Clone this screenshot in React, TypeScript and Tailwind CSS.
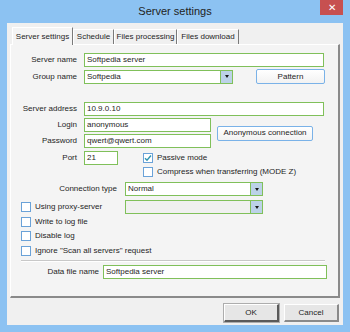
import React from 'react';

function TextBox({ value, className }: { value: string; className: string }) {
  return (
    <div className={`flex h-[14px] items-center border border-[#80c05a] bg-white px-[2px] leading-none ${className}`}>
      {value}
    </div>
  );
}

function Combo({ value, className, disabled }: { value: string; className: string; disabled?: boolean }) {
  return (
    <div className={`flex h-[14px] border border-[#80c05a] ${disabled ? 'bg-[#f0f0f0]' : 'bg-white'} ${className}`}>
      <div className="flex flex-1 items-center px-[2px] leading-none">{value}</div>
      <div className="flex w-[12px] items-center justify-center border-l border-[#80c05a] bg-[#bcd2e8]">
        <div className="h-0 w-0 border-x-[2.5px] border-t-[3px] border-x-transparent border-t-[#1a1a1a]" />
      </div>
    </div>
  );
}

function Check({ label, checked }: { label: string; checked?: boolean }) {
  return (
    <div className="flex items-center gap-[4px]">
      <div className="flex h-[10px] w-[10px] items-center justify-center border border-[#6aa2d8] bg-white">
        {checked && (
          <svg width="8" height="8" viewBox="0 0 8 8">
            <path d="M1 4.2 L3 6.2 L7 1.5" fill="none" stroke="#2f94b0" strokeWidth="1.4" />
          </svg>
        )}
      </div>
      <span className="leading-none">{label}</span>
    </div>
  );
}

function Label({ text, className }: { text: string; className: string }) {
  return <div className={`text-right leading-none ${className}`}>{text}</div>;
}

export default function App() {
  return (
    <div className="flex h-[332px] w-[350px] flex-col bg-[#8cc2f2] font-['Liberation_Sans',Arial,sans-serif] text-[8px] text-[#1e1e1e]">
      {/* title bar */}
      <div className="relative flex h-[23px] items-center justify-center text-[11px] text-[#222]">
        Server settings
        <div className="absolute right-[7px] top-0 flex h-[15px] w-[23px] items-center justify-center bg-[#c75050] text-[10px] text-white">
          ✕
        </div>
      </div>

      <div className="mx-[7px] mb-[7px] flex flex-1 flex-col bg-[#f0f0f0] px-[3px] pt-[4px]">
        {/* tabs */}
        <div className="flex h-[17px] items-end pl-[2px]">
          <div className="relative z-10 -mb-[1px] flex h-[18px] w-[61px] items-center justify-center border-l border-t border-r border-l-white border-t-white border-r-[#7a7a7a] bg-[#f4f4f4] leading-none">
            Server settings
          </div>
          <div className="flex h-[15px] w-[41px] items-center justify-center border-l border-t border-r border-l-white border-t-white border-r-[#7a7a7a] leading-none">
            Schedule
          </div>
          <div className="flex h-[15px] w-[63px] items-center justify-center border-l border-t border-r border-l-white border-t-white border-r-[#7a7a7a] leading-none">
            Files processing
          </div>
          <div className="flex h-[15px] w-[62px] items-center justify-center border-l border-t border-r border-l-white border-t-white border-r-[#7a7a7a] leading-none">
            Files download
          </div>
        </div>

        {/* panel */}
        <div className="flex h-[254px] flex-col border-l border-t border-b-2 border-r-2 border-l-white border-t-white border-b-[#8a8a8a] border-r-[#8a8a8a] bg-[#f4f4f4] pt-[8px]">
          <div className="flex h-[14px] items-center">
            <Label text="Server name" className="w-[66px]" />
            <TextBox value="Softpedia server" className="ml-[7px] w-[240px]" />
          </div>
          <div className="mt-[2px] flex items-center">
            <Label text="Group name" className="w-[66px]" />
            <Combo value="Softpedia" className="ml-[7px] w-[149px]" />
            <div className="ml-[23px] flex h-[15px] w-[69px] items-center justify-center rounded-[2px] border border-[#7ab2e8] bg-gradient-to-b from-white to-[#f2f2f2] leading-none">
              Pattern
            </div>
          </div>

          <div className="mt-[18px] flex h-[14px] items-center">
            <Label text="Server address" className="w-[66px]" />
            <TextBox value="10.9.0.10" className="ml-[7px] w-[240px]" />
          </div>

          <div className="mt-[2px] flex items-center">
            <div className="flex flex-col gap-[2px]">
              <div className="flex h-[14px] items-center">
                <Label text="Login" className="w-[66px]" />
                <TextBox value="anonymous" className="ml-[7px] w-[127px]" />
              </div>
              <div className="flex h-[14px] items-center">
                <Label text="Password" className="w-[66px]" />
                <TextBox value="qwert@qwert.com" className="ml-[7px] w-[127px]" />
              </div>
            </div>
            <div className="ml-[6px] flex h-[15px] w-[96px] items-center justify-center rounded-[2px] border border-[#7ab2e8] bg-gradient-to-b from-white to-[#f2f2f2] leading-none">
              Anonymous connection
            </div>
          </div>

          <div className="mt-[3px] flex h-[14px] items-center">
            <Label text="Port" className="w-[66px]" />
            <TextBox value="21" className="ml-[7px] w-[34px]" />
            <div className="ml-[25px]">
              <Check label="Passive mode" checked />
            </div>
          </div>
          <div className="flex h-[14px] items-center pl-[132px]">
            <Check label="Compress when transferring (MODE Z)" />
          </div>

          <div className="mt-[3px] flex h-[14px] items-center">
            <Label text="Connection type" className="w-[106px]" />
            <Combo value="Normal" className="ml-[8px] w-[138px]" />
          </div>

          <div className="mt-[4px] flex h-[14px] items-center pl-[10px]">
            <div className="w-[104px]">
              <Check label="Using proxy-server" />
            </div>
            <Combo value="" className="w-[138px]" disabled />
          </div>
          <div className="mt-[1px] flex h-[14px] items-center pl-[10px]">
            <Check label="Write to log file" />
          </div>
          <div className="flex h-[14px] items-center pl-[10px]">
            <Check label="Disable log" />
          </div>
          <div className="mt-[1px] flex h-[14px] items-center pl-[10px]">
            <Check label={'Ignore "Scan all servers" request'} />
          </div>

          <div className="ml-[10px] mt-[2px] w-[304px] border-t border-b border-t-[#c8c8c8] border-b-white" />

          <div className="mt-[3px] flex h-[14px] items-center">
            <Label text="Data file name" className="w-[88px]" />
            <TextBox value="Softpedia server" className="ml-[4px] w-[224px]" />
          </div>
        </div>

        {/* buttons */}
        <div className="mt-[6px] flex justify-end gap-[5px] pr-[1px]">
          <div className="flex h-[18px] w-[55px] items-center justify-center border border-b-2 border-r-2 border-l-white border-t-white border-b-[#5a5a5a] border-r-[#5a5a5a] bg-[#e6e6e6] outline outline-1 outline-[#adadad] leading-none">
            OK
          </div>
          <div className="flex h-[18px] w-[55px] items-center justify-center border border-b-2 border-r-2 border-l-white border-t-white border-b-[#8a8a8a] border-r-[#8a8a8a] bg-[#e6e6e6] leading-none">
            Cancel
          </div>
        </div>
      </div>
    </div>
  );
}
